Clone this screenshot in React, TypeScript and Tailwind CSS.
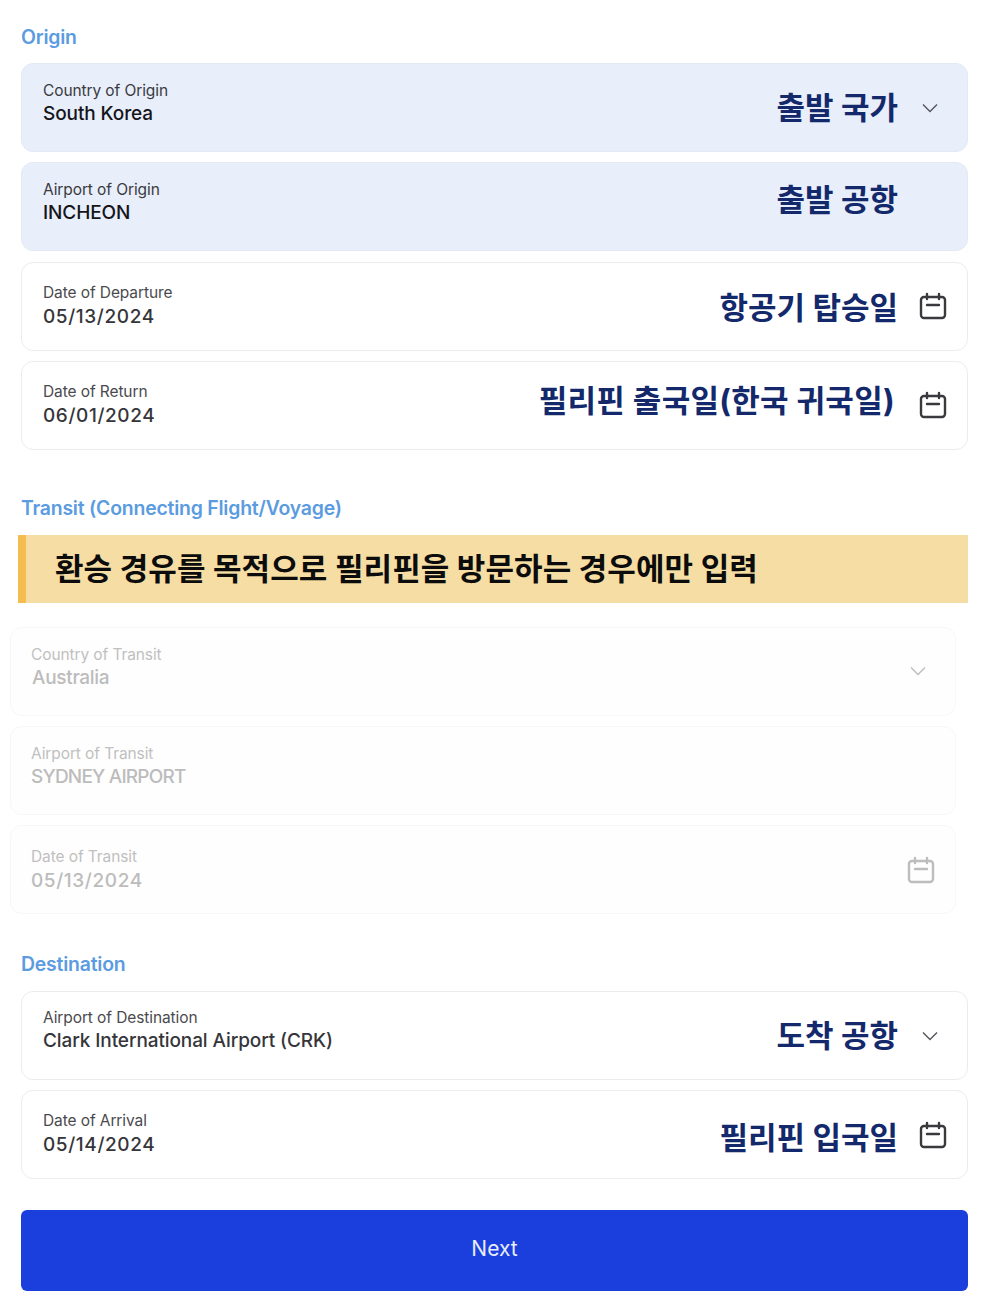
import React from 'react';

const sans = 'font-["Inter","Noto_Sans_CJK_KR",sans-serif]';

function CalendarIcon() {
  return (
    <svg width="28" height="28" viewBox="0 0 28 28" fill="none" stroke="currentColor" strokeWidth="2.4" strokeLinecap="round">
      <rect x="2" y="5" width="24" height="21" rx="3" />
      <path d="M8 2v5M20 2v5M8 13h12" />
    </svg>
  );
}

function ChevronIcon() {
  return (
    <svg width="16" height="10" viewBox="0 0 16 10" fill="none" stroke="currentColor" strokeWidth="1.4">
      <path d="M1 1.5l7 7 7-7" />
    </svg>
  );
}

interface FieldProps {
  label: string;
  value: string;
  valueClass?: string;
  bodyClass?: string;
  note?: string;
  noteClass?: string;
  icon?: 'chevron' | 'calendar';
  filled?: boolean;
  muted?: boolean;
}

function Field({ label, value, valueClass = '', bodyClass, note, noteClass = '', icon, filled, muted }: FieldProps) {
  const isDate = icon === 'calendar';
  const cardColor = filled
    ? 'bg-[#e8eefa] border-[#e3e9f5]'
    : muted
      ? 'bg-[#fefefe] border-[#f7f7f7]'
      : 'bg-white border-[#ececef]';

  return (
    <div className={`flex h-[89px] items-center justify-between rounded-xl border ${muted ? 'pl-[20px]' : 'pl-[21px]'} ${cardColor}`}>
      <div className={`h-full ${bodyClass ?? (isDate ? 'pt-[20px]' : 'pt-[17px]')}`}>
        <div className={`text-[15.5px] leading-[20px] tracking-[-0.1px] ${muted ? 'text-[#c0c0c0]' : filled ? 'text-[#3a3a3f]' : 'text-[#4a4a4e]'}`}>
          {label}
        </div>
        <div
          className={`text-[19px] leading-[24px] font-medium ${isDate ? 'mt-[2px] tracking-[0.6px]' : 'mt-[1px] tracking-[-0.1px]'} ${
            muted ? 'text-[#bcbcbc]' : filled ? 'text-[#15151a]' : 'text-[#35353a]'
          } ${valueClass}`}
        >
          {value}
        </div>
      </div>
      <div className="flex items-center">
        {note && (
          <span className={`text-[31px] leading-[40px] font-bold whitespace-nowrap text-[#13296b] ${noteClass}`}>
            {note}
          </span>
        )}
        <div
          className={`flex w-[69px] justify-center ${isDate ? '' : 'pr-[6px]'} ${
            muted ? 'text-[#bdbdbd]' : isDate ? 'text-[#3a3a3e]' : 'text-[#55555c]'
          }`}
        >
          {icon === 'chevron' && <ChevronIcon />}
          {icon === 'calendar' && <CalendarIcon />}
        </div>
      </div>
    </div>
  );
}

function SectionTitle({ children, className = '' }: { children: React.ReactNode; className?: string }) {
  return <h2 className={`text-[19.4px] leading-[26px] font-semibold tracking-[-0.2px] text-[#5b9be0] ${className}`}>{children}</h2>;
}

export default function App() {
  return (
    <div className={`h-[1298px] w-[986px] overflow-hidden bg-white pt-[24px] pr-[18px] pl-[21px] ${sans}`}>
      <SectionTitle>Origin</SectionTitle>
      <div className="mt-[13px] flex flex-col gap-[10.3px]">
        <Field filled label="Country of Origin" value="South Korea" note="출발 국가" icon="chevron" />
        <Field filled label="Airport of Origin" value="INCHEON" note="출발 공항" noteClass="mb-[14px]" />
        <Field label="Date of Departure" value="05/13/2024" note="항공기 탑승일" icon="calendar" noteClass="mt-[4px]" />
        <Field
          label="Date of Return"
          value="06/01/2024"
          note="필리핀 출국일(한국 귀국일)"
          icon="calendar"
          noteClass="mr-[3px] mb-[8px] tracking-[0.3px]"
        />
      </div>

      <SectionTitle className="mt-[45px]">Transit (Connecting Flight/Voyage)</SectionTitle>
      <div className="mt-[14px] -ml-[3px] flex h-[68px] items-center border-l-[8px] border-[#f4bd50] bg-[#f5dda3] pl-[29px]">
        <span className="text-[31px] font-bold tracking-[0.1px] text-[#0c0c0c]">환승 경유를 목적으로 필리핀을 방문하는 경우에만 입력</span>
      </div>
      <div className="mt-[24px] -ml-[11px] flex w-[946px] flex-col gap-[10.3px]">
        <Field muted label="Country of Transit" value="Australia" valueClass="ml-[1px] tracking-[-0.3px]" icon="chevron" />
        <Field muted label="Airport of Transit" value="SYDNEY AIRPORT" valueClass="tracking-[-0.8px]" />
        <Field muted label="Date of Transit" value="05/13/2024" icon="calendar" bodyClass="pt-[21px]" />
      </div>

      <SectionTitle className="mt-[37px]">Destination</SectionTitle>
      <div className="mt-[14px] flex flex-col gap-[10px]">
        <Field label="Airport of Destination" value="Clark International Airport (CRK)" note="도착 공항" icon="chevron" bodyClass="pt-[16px]" />
        <Field label="Date of Arrival" value="05/14/2024" note="필리핀 입국일" icon="calendar" noteClass="mt-[6px]" />
      </div>

      <button className="mt-[31px] h-[81px] w-full rounded-md bg-[#1a3fdc] pb-[5px] text-[21px] text-[#e8ecfb]">Next</button>
    </div>
  );
}
